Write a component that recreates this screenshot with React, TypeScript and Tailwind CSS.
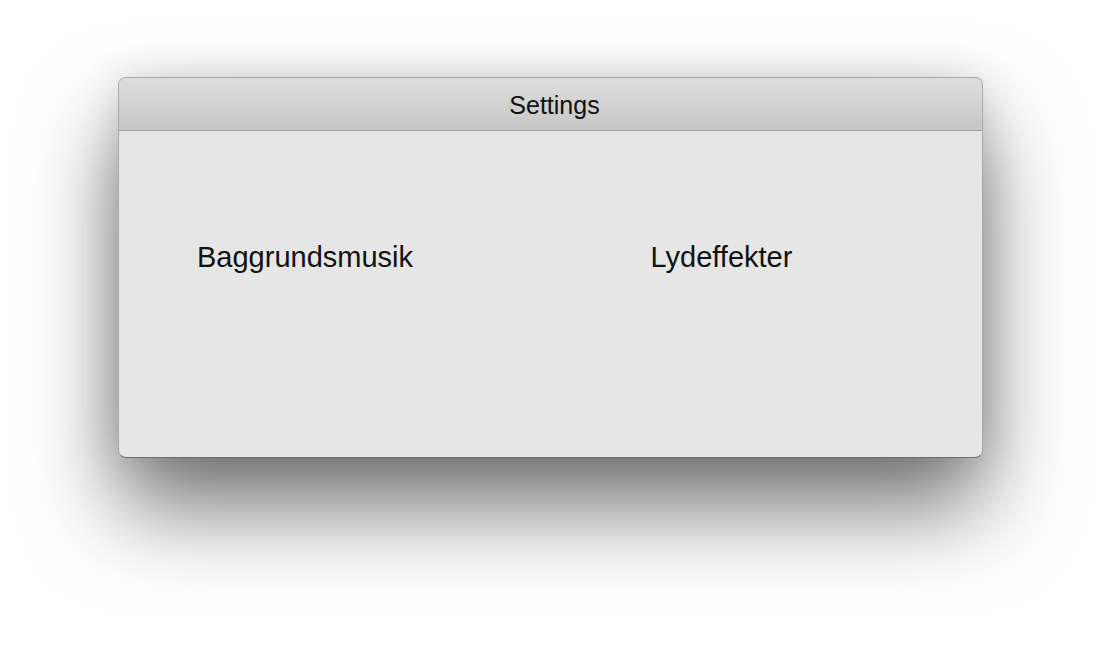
export default function App() {
  return (
    <div
      className="min-h-[651px] w-full bg-white flex justify-center pt-[77px]"
      style={{ fontFamily: '"Liberation Sans", Arial, sans-serif' }}
    >
      <div className="w-[865px] h-[381px] flex flex-col rounded-[8px] overflow-hidden border border-[#a8a8a8] border-b-[#6e6e6e] bg-[#e6e6e6] shadow-[0_50px_90px_rgba(0,0,0,0.55),0_0_40px_rgba(0,0,0,0.12)]">
        <div className="h-[53px] shrink-0 flex items-center justify-center bg-gradient-to-b from-[#dedede] to-[#c6c6c6] border-b border-[#a0a0a0] pl-[8px] pt-[3px]">
          <span className="text-[25px] text-[#111] leading-none">Settings</span>
        </div>
        <div className="flex-1 grid grid-cols-2 pt-[112px]">
          <div className="pl-[78px]">
            <span className="text-[29px] text-[#111] leading-none">Baggrundsmusik</span>
          </div>
          <div className="pl-[100px]">
            <span className="text-[29px] text-[#111] leading-none">Lydeffekter</span>
          </div>
        </div>
      </div>
    </div>
  );
}
